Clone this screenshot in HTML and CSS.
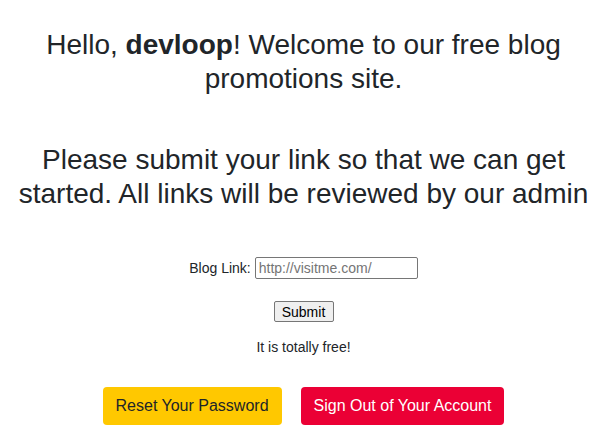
FILE: index.html
```html
<!DOCTYPE html>
<html>
<head>
<meta charset="utf-8">
<link rel="stylesheet" href="styles.css">
</head>
<body>
<main class="page">
  <h3 class="title first">Hello, <b>devloop</b>! Welcome to our free blog promotions site.</h3>
  <h3 class="title second">Please submit your link so that we can get started. All links will be reviewed by our admin</h3>
  <form class="form">
    <div class="row">
      <label class="label" for="link">Blog Link:</label>
      <input id="link" class="input" type="text" placeholder="http://visitme.com/">
    </div>
    <div class="row submit-row">
      <button class="submit" type="button">Submit</button>
    </div>
  </form>
  <p class="note">It is totally free!</p>
  <div class="actions">
    <a class="btn btn-warning">Reset Your Password</a>
    <a class="btn btn-danger">Sign Out of Your Account</a>
  </div>
</main>
</body>
</html>
```
FILE: styles.css
```css
html, body {
  margin: 0;
  padding: 0;
  background: #fff;
}
body {
  font-family: "Liberation Sans", Arial, sans-serif;
  color: #212529;
  font-size: 14px;
  line-height: 1.5;
}
.page {
  padding: 0 8px;
  text-align: center;
}
.title {
  font-size: 28px;
  line-height: 1.2;
  font-weight: 400;
  margin: 0;
}
.title b {
  font-weight: 700;
}
.first {
  padding-top: 28px;
}
.second {
  margin-top: 48px;
}
.form {
  margin-top: 47px;
}
.row {
  display: flex;
  justify-content: center;
  align-items: center;
  gap: 4px;
}
.label {
  font-size: 14px;
}
.input {
  font-family: "Liberation Sans", Arial, sans-serif;
  font-size: 14px;
  width: 163px;
  height: 22px;
  box-sizing: border-box;
  padding: 1px 3px;
  border: 1px solid #767676;
  border-radius: 2px;
  color: #212529;
}
.input::placeholder {
  color: #757575;
}
.submit-row {
  margin-top: 22px;
}
.submit {
  font-family: "Liberation Sans", Arial, sans-serif;
  font-size: 14px;
  height: 21px;
  width: 60px;
  padding: 1px 6px;
  border: 1px solid #767676;
  border-radius: 2px;
  background: #efefef;
  color: #000;
}
.note {
  margin: 15px 0 0;
}
.actions {
  margin-top: 29px;
  display: flex;
  justify-content: center;
  gap: 19px;
}
.btn {
  display: inline-block;
  font-size: 16px;
  line-height: 1.5;
  padding: 6px 12px;
  border: 1px solid transparent;
  border-radius: 4px;
  cursor: pointer;
}
.btn-warning {
  background: #ffc800;
  color: #212529;
}
.btn-danger {
  background: #eb0035;
  color: #fff;
}
```
